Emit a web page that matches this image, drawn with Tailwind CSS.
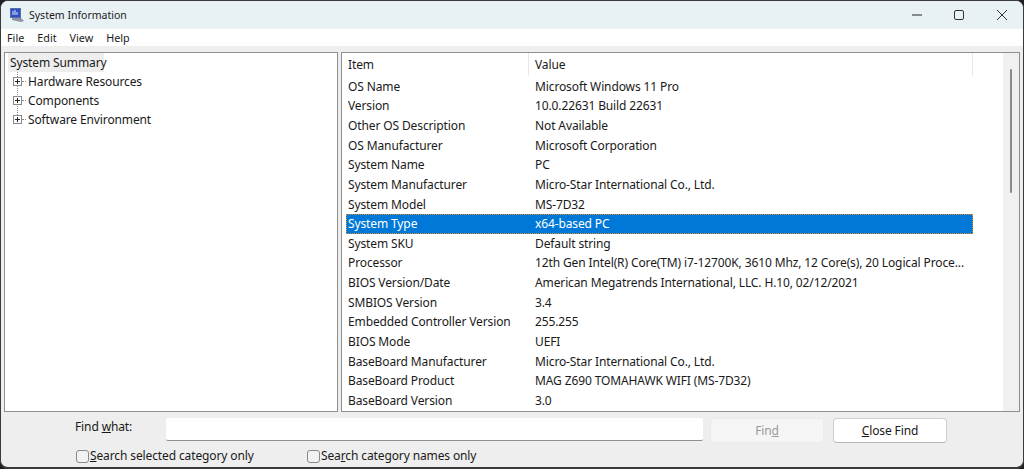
<!DOCTYPE html>
<html lang="en">
<head>
  <meta charset="UTF-8">
  <meta name="viewport" content="width=device-width, initial-scale=1.0">
  <title>System Information</title>
  <script src="https://cdn.jsdelivr.net/npm/@tailwindcss/browser@4"></script>
</head>
<body class="bg-[#1f1f1f] overflow-hidden">
  <div class="w-[1024px] h-[469px] overflow-hidden flex flex-col bg-[#eeeeee] rounded-[8px] border-t border-x border-b-2 border-[#3a3a3a] font-['Noto_Sans','Open_Sans',sans-serif] text-[12px] tracking-[-0.12px] text-[#1a1a1a]">

    <!-- Title bar -->
    <div class="h-[28px] shrink-0 bg-[#e8f2f5] flex items-center">
      <svg class="ml-[8px] w-[16px] h-[16px]" viewBox="0 0 16 16">
        <rect x="1" y="1" width="11" height="10" fill="#5a6fa8"/>
        <rect x="2" y="2" width="9" height="8" fill="#2c4fc4"/>
        <path d="M4 8V4M6 8V3M8 8V5" stroke="#dfe8ff" stroke-width="1"/>
        <path d="M3 11l9 0 3 3-3 1-9-2z" fill="#8a93a8"/>
      </svg>
      <span class="ml-[4px] mt-[2px] text-[10.5px] tracking-normal">System Information</span>
      <div class="ml-auto flex items-center">
        <div class="w-[38px] h-[28px] flex items-center justify-center">
          <svg class="w-[10px] h-[10px]" viewBox="0 0 10 10"><path d="M0 5h10" stroke="#222" stroke-width="1"/></svg>
        </div>
        <div class="w-[45px] h-[28px] flex items-center justify-center">
          <svg class="w-[10px] h-[10px]" viewBox="0 0 10 10"><rect x=".5" y=".5" width="9" height="9" rx="1.5" fill="none" stroke="#333"/></svg>
        </div>
        <div class="w-[42px] h-[28px] flex items-center justify-center">
          <svg class="w-[10px] h-[10px]" viewBox="0 0 10 10"><path d="M0 0l10 10M10 0L0 10" stroke="#333" stroke-width="1"/></svg>
        </div>
      </div>
    </div>

    <!-- Menu -->
    <div class="h-[17px] shrink-0 bg-white flex items-center pt-[2px] pl-[6px] gap-[13px] text-[10.8px] tracking-normal">
      <span>File</span><span>Edit</span><span>View</span><span>Help</span>
    </div>

    <!-- Panes -->
    <div class="flex gap-[3px] pl-[3px] pr-[3px] pt-[6px] h-[366px] shrink-0">
      <div class="w-[334px] bg-white border border-[#8f8f8f] pl-[3px]">
        <div class="bg-[#eeeeee] w-[96px] h-[19px] pl-[2px] flex items-center whitespace-nowrap">System Summary</div>
        <div class="relative">
          <div class="absolute left-[9px] top-0 h-[47px] border-l border-dotted border-[#888]"></div>
          <div class="h-[19px] flex items-center pl-[5px]">
            <svg class="w-[9px] h-[9px] relative" viewBox="0 0 9 9"><rect x=".5" y=".5" width="8" height="8" fill="#fff" stroke="#8a8a8a"/><path d="M2 4.5h5M4.5 2v5" stroke="#222"/></svg>
            <span class="w-[4px] border-t border-dotted border-[#888]"></span>
            <span class="ml-[2px]">Hardware Resources</span>
          </div>
          <div class="h-[19px] flex items-center pl-[5px]">
            <svg class="w-[9px] h-[9px] relative" viewBox="0 0 9 9"><rect x=".5" y=".5" width="8" height="8" fill="#fff" stroke="#8a8a8a"/><path d="M2 4.5h5M4.5 2v5" stroke="#222"/></svg>
            <span class="w-[4px] border-t border-dotted border-[#888]"></span>
            <span class="ml-[2px]">Components</span>
          </div>
          <div class="h-[19px] flex items-center pl-[5px]">
            <svg class="w-[9px] h-[9px] relative" viewBox="0 0 9 9"><rect x=".5" y=".5" width="8" height="8" fill="#fff" stroke="#8a8a8a"/><path d="M2 4.5h5M4.5 2v5" stroke="#222"/></svg>
            <span class="w-[4px] border-t border-dotted border-[#888]"></span>
            <span class="ml-[2px]">Software Environment</span>
          </div>
        </div>
      </div>

      <div class="flex-1 bg-white border border-[#8f8f8f] flex overflow-hidden">
        <div class="w-[631px] pl-[4px] shrink-0">
          <div class="h-[24px] flex items-center relative">
            <div class="w-[187px] pl-[2px]">Item</div>
            <div class="pl-[2px]">Value</div>
            <div class="absolute left-[182px] top-0 h-[23px] border-l border-[#e8e8e8]"></div>
            <div class="absolute left-[626px] top-0 h-[23px] border-l border-[#e8e8e8]"></div>
          </div>
          <div id="rows"></div>
        </div>
        <div class="ml-auto w-[16px] bg-[#f0f0f0] flex justify-center pt-[16px]">
          <div class="w-[2px] h-[124px] bg-[#8a8a8a] rounded-full"></div>
        </div>
      </div>
    </div>

    <!-- Find bar -->
    <div class="flex-1">
      <div class="flex items-start pl-[75px] pt-[6px]">
        <span class="-ml-[1px] mt-[1px] w-[91px] leading-[16px]">Find <u>w</u>hat:</span>
        <div class="w-[537px] h-[23px] bg-white border-b border-[#8f8f8f] rounded-[2px]"></div>
        <div class="ml-[7px] w-[114px] h-[25px] pt-[1px] bg-[#f5f5f5] border border-[#ebebeb] rounded-[4px] flex items-center justify-center text-[#9a9a9a]"><span>Fin<u>d</u></span></div>
        <div class="ml-[9px] w-[114px] h-[25px] pt-[1px] bg-white border border-[#d0d0d0] border-b-[#b5b5b5] rounded-[4px] flex items-center justify-center"><span><u>C</u>lose Find</span></div>
      </div>
      <div class="flex items-center pl-[75px] mt-[4px]">
        <span class="w-[13px] h-[13px] bg-[#f2f2f2] border border-[#8a8a8a] rounded-[3px] mr-[1px]"></span>
        <span class="w-[217px]"><u>S</u>earch selected category only</span>
        <span class="w-[13px] h-[13px] bg-[#f2f2f2] border border-[#8a8a8a] rounded-[3px] mr-[1px]"></span>
        <span>Sea<u>r</u>ch category names only</span>
      </div>
    </div>
  </div>

  <script>
    // Summary rows
    const items = [
      ['OS Name', 'Microsoft Windows 11 Pro'],
      ['Version', '10.0.22631 Build 22631'],
      ['Other OS Description', 'Not Available'],
      ['OS Manufacturer', 'Microsoft Corporation'],
      ['System Name', 'PC'],
      ['System Manufacturer', 'Micro-Star International Co., Ltd.'],
      ['System Model', 'MS-7D32'],
      ['System Type', 'x64-based PC'],
      ['System SKU', 'Default string'],
      ['Processor', '12th Gen Intel(R) Core(TM) i7-12700K, 3610 Mhz, 12 Core(s), 20 Logical Proce...'],
      ['BIOS Version/Date', 'American Megatrends International, LLC. H.10, 02/12/2021'],
      ['SMBIOS Version', '3.4'],
      ['Embedded Controller Version', '255.255'],
      ['BIOS Mode', 'UEFI'],
      ['BaseBoard Manufacturer', 'Micro-Star International Co., Ltd.'],
      ['BaseBoard Product', 'MAG Z690 TOMAHAWK WIFI (MS-7D32)'],
      ['BaseBoard Version', '3.0'],
    ];
    const rows = document.getElementById('rows');
    items.forEach(([item, value]) => {
      const row = document.createElement('div');
      const selected = item === 'System Type';
      row.className = selected
        ? 'h-[19.625px] flex items-center whitespace-nowrap bg-[#0078d7] text-white outline-1 outline-dotted outline-[#e08a2c] -outline-offset-1'
        : 'h-[19.625px] flex items-center whitespace-nowrap';
      row.innerHTML = `<div class="w-[187px] pl-[2px]">${item}</div><div class="pl-[2px]">${value}</div>`;
      rows.appendChild(row);
    });
  </script>
</body>
</html>
